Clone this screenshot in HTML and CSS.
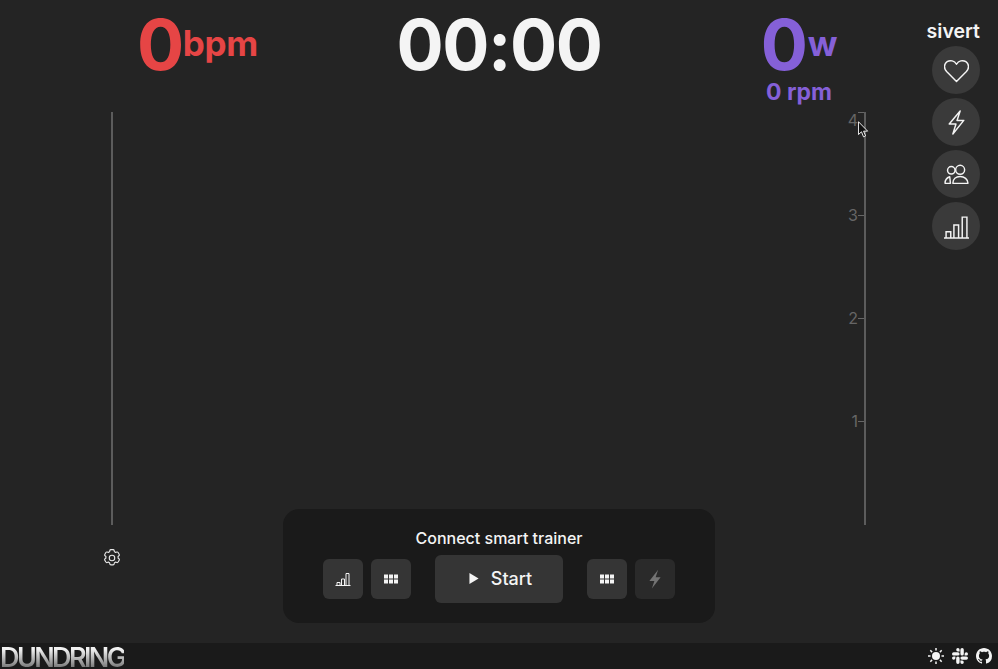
FILE: index.html
```html
<!DOCTYPE html>
<html lang="en">
<head>
    <meta charset="UTF-8">
    <meta name="viewport" content="width=device-width, initial-scale=1.0">
    <title>Dundring</title>
    <link rel="stylesheet" href="styles.css">
</head>
<body>
    <div class="page">
        <main class="main">
            <div class="stats">
                <div class="stat heart">
                    <div class="stat-row"><span class="big">0</span><span class="unit">bpm</span></div>
                </div>
                <div class="stat clock"><span class="big">00:00</span></div>
                <div class="stat power">
                    <div class="stat-row"><span class="big">0</span><span class="unit">w</span></div>
                    <div class="rpm">0 rpm</div>
                </div>
            </div>

            <div class="chart">
                <div class="axis-left"></div>
                <div class="axis-right">
                    <div class="tick"><span>4</span></div>
                    <div class="tick"><span>3</span></div>
                    <div class="tick"><span>2</span></div>
                    <div class="tick"><span>1</span></div>
                </div>
            </div>

            <div class="bottom">
                <div class="settings">
                    <svg class="gear" viewBox="0 0 24 24" fill="none" stroke="currentColor" stroke-width="1.2" stroke-linejoin="round">
                        <path d="M9.6 3.9c.1-.6.6-1 1.2-1h2.400c.6 0 1.100.4 1.200 1l.2 1.300c.5.2 1 .5 1.400.8l1.200-.5c.6-.2 1.200 0 1.500.5l1.200 2.100c.3.5.2 1.100-.3 1.500l-1 .8c.1.500.1 1.100 0 1.600l1 .8c.5.400.6 1 .3 1.500l-1.200 2.100c-.3.500-.9.700-1.500.5l-1.200-.5c-.4.300-.9.600-1.400.8l-.2 1.300c-.1.600-.6 1-1.200 1h-2.400c-.6 0-1.100-.4-1.200-1l-.2-1.300c-.5-.2-1-.5-1.400-.8l-1.200.5c-.6.200-1.200 0-1.500-.5l-1.200-2.100c-.3-.5-.2-1.100.3-1.500l1-.8c-.1-.5-.1-1.100 0-1.600l-1-.8c-.5-.4-.6-1-.3-1.500l1.200-2.100c.3-.5.9-.7 1.500-.5l1.200.5c.4-.3.9-.6 1.400-.8z"/>
                        <circle cx="12" cy="12" r="3"/>
                    </svg>
                </div>
                <div class="panel">
                    <div class="panel-title">Connect smart trainer</div>
                    <div class="controls">
                        <div class="btn-group">
                            <button class="btn">
                                <svg class="icon-sm" viewBox="0 0 16 16" fill="none" stroke="currentColor" stroke-width="1">
                                    <path d="M.5 14.500h15M2 14.500v-3h3v3M6.500 14.500v-6.500h3v6.500M11 14.500v-12h3v12"/>
                                </svg>
                            </button>
                            <button class="btn">
                                <svg class="icon-sm" viewBox="0 0 16 16" fill="currentColor">
                                    <path d="M1 3.500h4v4h-4zM6 3.500h4v4h-4zM11 3.500h4v4h-4zM1 8.500h4v4h-4zM6 8.500h4v4h-4zM11 8.500h4v4h-4z"/>
                                </svg>
                            </button>
                        </div>
                        <button class="btn-start">
                            <svg class="play" viewBox="0 0 10 12" fill="currentColor"><path d="M0 0l10 6-10 6z"/></svg>
                            Start
                        </button>
                        <div class="btn-group">
                            <button class="btn">
                                <svg class="icon-sm" viewBox="0 0 16 16" fill="currentColor">
                                    <path d="M1 3.500h4v4h-4zM6 3.500h4v4h-4zM11 3.500h4v4h-4zM1 8.500h4v4h-4zM6 8.500h4v4h-4zM11 8.500h4v4h-4z"/>
                                </svg>
                            </button>
                            <button class="btn disabled">
                                <svg class="icon-md" viewBox="0 0 16 16" fill="currentColor">
                                    <path d="M10.500 .500l-7 9h4l-2 6 7-9h-4z"/>
                                </svg>
                            </button>
                        </div>
                    </div>
                </div>
            </div>

            <aside class="user">
                <div class="user-name">sivert</div>
                <div class="round">
                    <svg viewBox="0 0 24 24" fill="none" stroke="currentColor" stroke-width="1.400" stroke-linejoin="round">
                        <path d="M12 22.500L2.500 13C-.5 9.800 0 5.500 3 3.500 6 1.700 10 2.500 12 6c2-3.500 6-4.300 9-2.500 3 2 3.500 6.300.5 9.500z"/>
                    </svg>
                </div>
                <div class="round">
                    <svg viewBox="0 0 24 24" fill="none" stroke="currentColor" stroke-width="1.400" stroke-linejoin="round">
                        <path d="M15.500 1L5 13.500h6.500L8.500 23 19 10h-6.500z"/>
                    </svg>
                </div>
                <div class="round">
                    <svg viewBox="0 0 24 24" fill="none" stroke="currentColor" stroke-width="1.400" stroke-linejoin="round">
                        <circle cx="7" cy="8" r="3.600"/>
                        <circle cx="15.500" cy="7.500" r="4.300"/>
                        <path d="M1 20.500c0-3.200 1.500-5.300 4.500-6.300l.7 6.300zM8.500 20.500c0-4 3-6.500 7-6.500s7.500 2.500 7.500 6.500z"/>
                    </svg>
                </div>
                <div class="round">
                    <svg viewBox="0 0 24 24" fill="none" stroke="currentColor" stroke-width="1.400">
                        <path d="M0 23h24M2 23v-6h4.500v6M9.500 23v-12.500h4.500v12.500M17.500 23v-20h4.500v20"/>
                    </svg>
                </div>
            </aside>

            <svg class="cursor" viewBox="0 0 12 18">
                <path d="M.5.500v14l3.300-3 2.200 5.500 2.300-1-2.200-5.200h4.400z" fill="#111" stroke="#fff" stroke-width="1"/>
            </svg>
        </main>

        <footer class="footer">
            <div class="logo">DUNDRING</div>
            <div class="footer-icons">
                <svg viewBox="0 0 16 16" fill="currentColor">
                    <circle cx="8" cy="8" r="4"/>
                    <path d="M8 0v2.500M8 13.500v2.500M0 8h2.500M13.500 8h2.500M2.300 2.300l1.800 1.800M11.900 11.900l1.800 1.800M2.300 13.700l1.800-1.800M11.900 4.100l1.800-1.800" stroke="currentColor" stroke-width="1.500"/>
                </svg>
                <svg viewBox="0 0 16 16" fill="currentColor">
                    <path d="M3.400 10.100a1.700 1.700 0 1 1-1.700-1.700h1.700zM4.200 10.100a1.700 1.700 0 0 1 3.400 0v4.200a1.700 1.700 0 0 1-3.400 0zM5.900 3.400a1.700 1.700 0 1 1 1.700-1.700v1.700zM5.900 4.200a1.700 1.700 0 0 1 0 3.400H1.700a1.700 1.700 0 0 1 0-3.400zM12.600 5.900a1.700 1.700 0 1 1 1.700 1.700h-1.700zM11.800 5.900a1.700 1.700 0 0 1-3.400 0V1.700a1.700 1.700 0 0 1 3.400 0zM10.100 12.600a1.700 1.700 0 1 1-1.700 1.700v-1.700zM10.100 11.800a1.700 1.700 0 0 1 0-3.400h4.200a1.700 1.700 0 0 1 0 3.400z"/>
                </svg>
                <svg viewBox="0 0 16 16" fill="currentColor">
                    <path d="M8 0C3.580 0 0 3.580 0 8c0 3.540 2.290 6.530 5.470 7.590.4.070.55-.17.55-.38 0-.19-.01-.82-.01-1.490-2.010.37-2.530-.49-2.690-.94-.09-.23-.48-.94-.82-1.130-.28-.15-.68-.52-.01-.53.63-.01 1.080.58 1.230.82.72 1.210 1.870.87 2.330.66.070-.52.280-.87.510-1.070-1.780-.2-3.640-.89-3.640-3.950 0-.87.310-1.590.820-2.150-.080-.2-.360-1.020.080-2.120 0 0 .670-.21 2.200.820.640-.180 1.320-.270 2-.270s1.360.090 2 .270c1.530-1.040 2.200-.820 2.200-.820.440 1.100.160 1.920.080 2.120.510.560.820 1.270.820 2.150 0 3.070-1.870 3.750-3.650 3.950.290.250.540.730.540 1.480 0 1.070-.010 1.930-.010 2.200 0 .210.150.460.550.380A8.010 8.010 0 0 0 16 8c0-4.420-3.580-8-8-8z"/>
                </svg>
            </div>
        </footer>
    </div>
</body>
</html>
```

FILE: styles.css
```css
* {
    box-sizing: border-box;
}

body {
    margin: 0;
    font-family: Inter, "Noto Sans", sans-serif;
    background-color: #242424;
    color: #f4f4f4;
}

.page {
    display: flex;
    flex-direction: column;
    height: 669px;
    overflow: hidden;
}

.main {
    position: relative;
    flex: 1;
}

/* top numbers */
.stats {
    display: flex;
    justify-content: center;
    height: 112px;
}

.stat {
    width: 300px;
    display: flex;
    flex-direction: column;
    align-items: center;
    padding-top: 11px;
}

.stat-row {
    display: flex;
    align-items: baseline;
}

.big {
    font-size: 70px;
    line-height: 68px;
    font-weight: 700;
    letter-spacing: -1.4px;
}

.unit {
    font-size: 35px;
    font-weight: 700;
    letter-spacing: -0.3px;
    position: relative;
    top: -14px;
}

.heart {
    color: #e64545;
    padding-right: 3px;
}

.power {
    color: #8560d8;
}

.power .unit {
    margin-left: 1px;
}

.rpm {
    font-size: 23px;
    line-height: 26px;
    font-weight: 700;
}

/* chart */
.chart {
    display: flex;
    justify-content: space-between;
    height: 413px;
    padding: 0 132px 0 111px;
}

.axis-left {
    width: 2px;
    background-color: #5c5c5c;
}

.axis-right {
    width: 2px;
    background-color: #5c5c5c;
    position: relative;
}

.tick {
    height: 103px;
    position: relative;
}

.tick::after {
    content: "";
    position: absolute;
    top: 0;
    left: -6px;
    width: 6px;
    height: 1px;
    background-color: #666;
}

.tick span {
    position: absolute;
    top: -9px;
    right: 8px;
    font-size: 16px;
    line-height: 18px;
    color: #666;
}

.tick:first-child span {
    top: -1px;
}

/* bottom row */
.bottom {
    display: grid;
    grid-template-columns: 283px 432px 1fr;
    margin-top: -16px;
}

.settings {
    padding: 38px 0 0 101px;
}

.gear {
    display: block;
    width: 22px;
    height: 22px;
    color: #e8e8e8;
}

.panel {
    height: 114px;
    background-color: #1a1a1a;
    border-radius: 16px;
    padding-top: 19px;
}

.panel-title {
    text-align: center;
    font-size: 16px;
    line-height: 20px;
    font-weight: 500;
}

.controls {
    display: flex;
    justify-content: center;
    align-items: center;
    gap: 24px;
    margin-top: 7px;
}

.btn-group {
    display: flex;
    gap: 8px;
}

button {
    border: none;
    color: #f4f4f4;
    font-family: inherit;
    padding: 0;
}

.btn {
    width: 40px;
    height: 40px;
    border-radius: 6px;
    background-color: #353535;
    display: flex;
    align-items: center;
    justify-content: center;
}

.btn.disabled {
    background-color: #2a2a2a;
    color: #737373;
}

.icon-sm {
    width: 16px;
    height: 16px;
}

.icon-md {
    width: 20px;
    height: 20px;
}

.btn-start {
    width: 128px;
    height: 48px;
    border-radius: 6px;
    background-color: #353535;
    font-size: 18px;
    line-height: 20px;
    font-weight: 500;
    display: flex;
    align-items: center;
    justify-content: center;
    gap: 12px;
    padding: 0 0 1px 3px;
}

.play {
    width: 10px;
    height: 11px;
}

/* user column */
.user {
    position: absolute;
    top: 20px;
    right: 18px;
    width: 48px;
    display: flex;
    flex-direction: column;
    align-items: flex-end;
    gap: 4px;
}

.user-name {
    font-size: 19.5px;
    line-height: 22px;
    font-weight: 600;
    white-space: nowrap;
}

.round {
    width: 48px;
    height: 48px;
    border-radius: 50%;
    background-color: #3a3a3a;
    display: flex;
    align-items: center;
    justify-content: center;
}

.round svg {
    width: 25px;
    height: 25px;
}

.cursor {
    position: absolute;
    left: 858px;
    top: 121px;
    width: 11px;
    height: 17px;
}

/* footer */
.footer {
    height: 26px;
    background-color: #1a1a1a;
    display: flex;
    align-items: center;
    justify-content: space-between;
    padding-right: 6px;
}

.logo {
    font-size: 27px;
    line-height: 26px;
    font-weight: 600;
    letter-spacing: -2.600px;
    padding-top: 3px;
    background: linear-gradient(#f2f2f2 25%, #6a6a6a 95%);
    -webkit-background-clip: text;
    background-clip: text;
    color: transparent;
}

.footer-icons {
    display: flex;
    gap: 8px;
    color: #f4f4f4;
}

.footer-icons svg {
    width: 16px;
    height: 16px;
    display: block;
}
```
